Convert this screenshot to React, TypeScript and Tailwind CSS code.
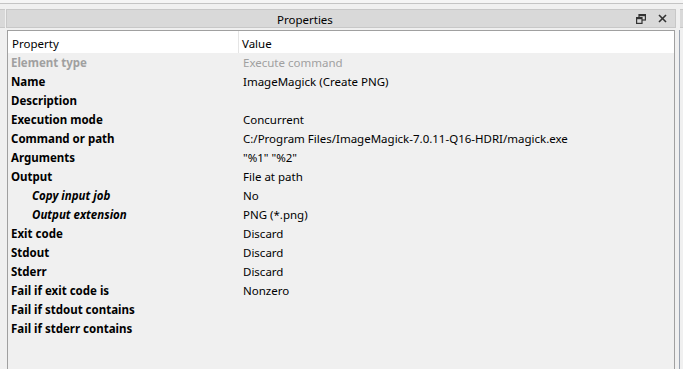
const rows: { label: string; value: string; indent?: boolean; disabled?: boolean }[] = [
  { label: 'Element type', value: 'Execute command', disabled: true },
  { label: 'Name', value: 'ImageMagick (Create PNG)' },
  { label: 'Description', value: '' },
  { label: 'Execution mode', value: 'Concurrent' },
  { label: 'Command or path', value: 'C:/Program Files/ImageMagick-7.0.11-Q16-HDRI/magick.exe' },
  { label: 'Arguments', value: '"%1" "%2"' },
  { label: 'Output', value: 'File at path' },
  { label: 'Copy input job', value: 'No', indent: true },
  { label: 'Output extension', value: 'PNG (*.png)', indent: true },
  { label: 'Exit code', value: 'Discard' },
  { label: 'Stdout', value: 'Discard' },
  { label: 'Stderr', value: 'Discard' },
  { label: 'Fail if exit code is', value: 'Nonzero' },
  { label: 'Fail if stdout contains', value: '' },
  { label: 'Fail if stderr contains', value: '' },
];

function FloatIcon() {
  return (
    <svg width="10" height="10" viewBox="0 0 10 10" fill="none" stroke="#333" strokeWidth="1.2">
      <rect x="3" y="0.6" width="6.4" height="5.4" />
      <rect x="0.6" y="3.6" width="5.4" height="5.8" fill="#d9d9d9" />
      <line x1="0.6" y1="4.6" x2="6" y2="4.6" />
      <line x1="3" y1="1.6" x2="9.4" y2="1.6" />
    </svg>
  );
}

function CloseIcon() {
  return (
    <svg width="9" height="9" viewBox="0 0 9 9" stroke="#333" strokeWidth="1.6">
      <line x1="1" y1="1" x2="8" y2="8" />
      <line x1="8" y1="1" x2="1" y2="8" />
    </svg>
  );
}

export default function App() {
  return (
    <div
      className="w-[683px] h-[369px] bg-[#f0f0f0] overflow-hidden flex flex-col text-[11.5px] text-black"
      style={{ fontFamily: '"Noto Sans", "Open Sans", sans-serif' }}
    >
      {/* top splitter */}
      <div className="h-[4px] border-b border-[#c4c4c4] bg-[#f5f5f5]" />

      <div className="flex flex-1 pt-[5px]">
        {/* left neighbour panel */}
        <div className="w-[5px] flex flex-col">
          <div className="h-[19px] bg-[#d9d9d9] border-y border-[#c8c8c8]" />
          <div className="flex-1" />
        </div>
        <div className="w-[1px]" />

        {/* properties dock */}
        <div className="w-[670px] flex flex-col">
          <div className="h-[19px] bg-[#d9d9d9] border border-[#c8c8c8] flex items-center relative">
            <span className="absolute left-[270px] top-[1px] leading-[17px]">Properties</span>
            <div className="ml-auto flex items-center gap-[12px] mr-[8px]">
              <FloatIcon />
              <CloseIcon />
            </div>
          </div>

          <div className="flex-1 mt-[2px] border-l border-r border-t border-[#a0a0a0] ml-[1px] mr-[1px] flex flex-col">
            <div className="flex h-[22px] bg-white">
              <div className="w-[231px] h-full border-r border-[#e5e5e5] pl-[4px] pt-[6px] leading-[14px]">Property</div>
              <div className="pl-[3px] pt-[6px] leading-[14px]">Value</div>
            </div>
            {rows.map((r) => (
              <div key={r.label} className="flex h-[19px] items-center">
                <div
                  className={`w-[232px] font-bold ${r.indent ? 'pl-[24px] italic' : 'pl-[3px]'} ${
                    r.disabled ? 'text-[#a0a0a0]' : 'text-black'
                  }`}
                >
                  {r.label}
                </div>
                <div className={`pl-[3px] ${r.disabled ? 'text-[#a0a0a0]' : ''}`}>{r.value}</div>
              </div>
            ))}
          </div>
        </div>

        {/* right neighbour panel */}
        <div className="w-[3px]" />
        <div className="w-[1px] mt-[21px] bg-[#9aa3b0]" />
        <div className="flex-1 flex flex-col">
          <div className="h-[19px] bg-[#d9d9d9] border-y border-[#c8c8c8]" />
        </div>
      </div>
    </div>
  );
}
